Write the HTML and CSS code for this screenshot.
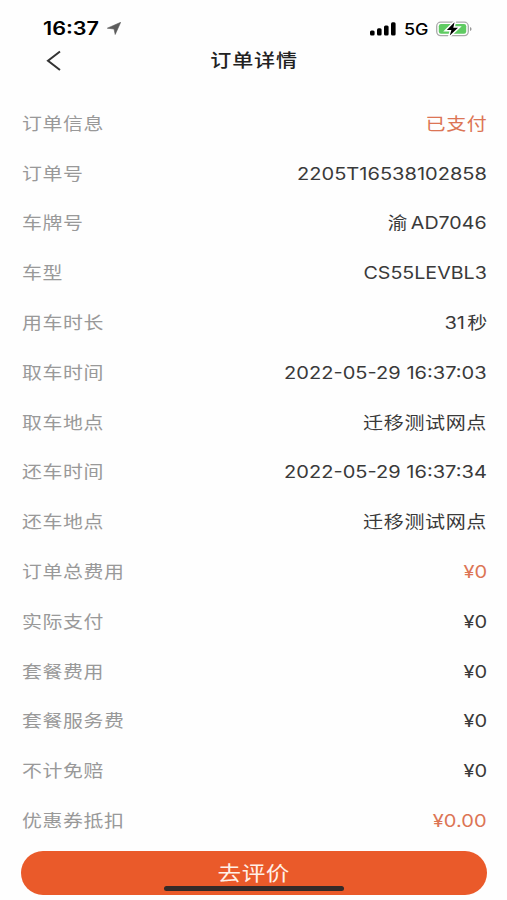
FILE: index.html
```html
<!DOCTYPE html>
<html lang="zh-CN">
<head>
<meta charset="utf-8">
<title>订单详情</title>
<link rel="stylesheet" href="styles.css">
</head>
<body>
<div class="status">
    <span class="time">16:37</span>
    <svg class="locate" width="14" height="13" viewBox="0 0 14 13"><path d="M0.3 6.2 L13.7 0.3 L8.2 12.5 L7 7 Z" fill="#5c5c5c" stroke="#5c5c5c" stroke-width="0.6"/></svg>
    <svg class="signal" width="26" height="14" viewBox="0 0 26 14">
        <rect x="0" y="8.5" width="4.6" height="5" rx="1.5"/>
        <rect x="7" y="6.3" width="4.6" height="7.2" rx="1.5"/>
        <rect x="14" y="3.5" width="4.6" height="10" rx="1.5"/>
        <rect x="21" y="0.2" width="4.6" height="13.3" rx="1.5"/>
    </svg>
    <span class="net">5G</span>
    <svg class="battery" width="36" height="16" viewBox="0 0 36 16">
        <rect x="0.7" y="1.2" width="31.6" height="13.4" rx="4" fill="#fff" stroke="#aaa" stroke-width="1.3"/>
        <rect x="2.8" y="3" width="27.4" height="9.8" rx="2.2" fill="#5fcb62"/>
        <path d="M34 5.9 Q35.6 6.4 35.6 8 Q35.6 9.6 34 10.1 Z" fill="#999"/>
        <path d="M18.5 1.2 L10.8 9 H15.4 L13.8 14.6 L22 6.7 H17.3 Z" fill="#000" stroke="#fff" stroke-width="3" paint-order="stroke"/>
    </svg>
</div>
<div class="nav">
    <svg class="back" width="16" height="22" viewBox="0 0 16 22"><path d="M14 1.5 L2 10.7 L14 20" fill="none" stroke="#333" stroke-width="2"/></svg>
    <h1>订单详情</h1>
</div>

<ul class="list">
    <li><span class="name">订单信息</span><span class="val cn red">已支付</span></li>
    <li><span class="name">订单号</span><span class="val">2205T16538102858</span></li>
    <li><span class="name">车牌号</span><span class="val plate">渝<b>AD7046</b></span></li>
    <li><span class="name">车型</span><span class="val model">CS55LEVBL3</span></li>
    <li><span class="name">用车时长</span><span class="val sec">31<b>秒</b></span></li>
    <li><span class="name">取车时间</span><span class="val">2022-05-29 16:37:03</span></li>
    <li><span class="name">取车地点</span><span class="val cn">迁移测试网点</span></li>
    <li><span class="name">还车时间</span><span class="val">2022-05-29 16:37:34</span></li>
    <li><span class="name">还车地点</span><span class="val cn">迁移测试网点</span></li>
    <li><span class="name">订单总费用</span><span class="val red">¥0</span></li>
    <li><span class="name">实际支付</span><span class="val">¥0</span></li>
    <li><span class="name">套餐费用</span><span class="val">¥0</span></li>
    <li><span class="name">套餐服务费</span><span class="val">¥0</span></li>
    <li><span class="name">不计免赔</span><span class="val">¥0</span></li>
    <li><span class="name">优惠券抵扣</span><span class="val red">¥0.00</span></li>
</ul>

<div class="btn">
    <span>去评价</span>
    <i class="home"></i>
</div>
</body>
</html>
```

FILE: styles.css
```css
* {
    box-sizing:border-box;
}
body {
    margin:0;
    height:900px;
    overflow:hidden;
    background:#fefefe;
    color:#3a3a3a;
    font-family:Inter, "Noto Sans CJK SC", sans-serif;
    font-size:17px;
}
svg {
    display:block;
    flex:none;
}
.status {
    display:flex;
    align-items:center;
    height:41px;
    padding:16px 35px 0 43px;
    color:#000;
}
.time {
    width:57px;
    font-size:18px;
    font-weight:600;
    white-space:nowrap;
    transform:scaleX(1.2);
    transform-origin:left;
}
.locate {
    margin-left:7px;
}
.signal {
    margin-left:auto;
}
.net {
    width:32px;
    margin-left:8px;
    font-size:16px;
    font-weight:500;
    transform:scaleX(1.12);
    transform-origin:left;
}
.nav {
    display:grid;
    grid-template-columns:60px 1fr 60px;
    align-items:center;
    height:38px;
}
.back {
    margin-left:46px;
}
h1 {
    margin:0;
    padding:1px 0 0 1px;
    font-size:18px;
    font-weight:500;
    line-height:38px;
    text-align:center;
    letter-spacing:0.7px;
    color:#222;
    transform:scaleX(1.17);
}
.list {
    margin:20px 0 0;
    padding:0 20px 0 21.5px;
    list-style:none;
}
.list li {
    display:flex;
    align-items:center;
    justify-content:space-between;
    height:49.8px;
    line-height:20px;
    white-space:nowrap;
}
.name {
    color:#999;
    letter-spacing:0.5px;
    transform:scaleX(1.17);
    transform-origin:left;
}
.val {
    transform:scaleX(1.18);
    transform-origin:right;
}
.val b {
    font-weight:normal;
}
.cn {
    letter-spacing:0.5px;
}
.plate,
.model {
    transform:scaleX(1.155);
}
.plate b {
    margin-left:3px;
}
.sec b {
    margin-left:2px;
}
.red {
    color:#dc7555;
}
.btn {
    position:relative;
    height:44px;
    margin:5px 20px 0 21px;
    border-radius:22px;
    background:#ea5a2a;
    color:#fff0e8;
    font-size:20px;
    line-height:46px;
    text-align:center;
}
.btn span {
    display:inline-block;
    letter-spacing:0.5px;
    transform:scaleX(1.18);
}
.home {
    position:absolute;
    left:143px;
    bottom:4px;
    width:180px;
    height:5px;
    border-radius:3px;
    background:#352a28;
}
```
